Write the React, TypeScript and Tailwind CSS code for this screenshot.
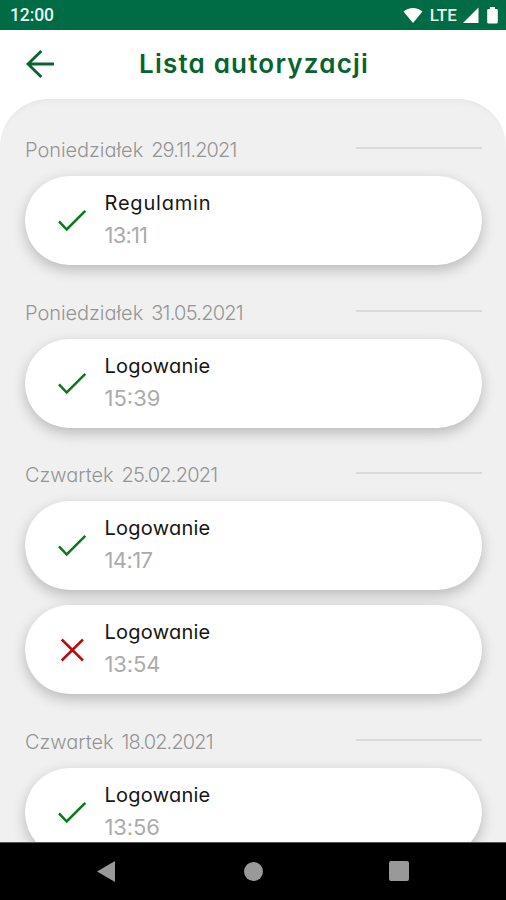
interface Entry { title: string; time: string; ok: boolean; titleTracking: string; timeTracking: string }
interface Day { day: string; date: string; dateTracking: string; entries: Entry[] }

const DAYS: Day[] = [
  {
    day: 'Poniedziałek', date: '29.11.2021', dateTracking: 'tracking-[-0.85px]',
    entries: [{ title: 'Regulamin', time: '13:11', ok: true, titleTracking: 'tracking-[0.8px]', timeTracking: 'tracking-[-0.8px]' }],
  },
  {
    day: 'Poniedziałek', date: '31.05.2021', dateTracking: 'tracking-[-0.75px]',
    entries: [{ title: 'Logowanie', time: '15:39', ok: true, titleTracking: 'tracking-[0.25px]', timeTracking: 'tracking-[0px]' }],
  },
  {
    day: 'Czwartek', date: '25.02.2021', dateTracking: 'tracking-[-0.8px]',
    entries: [
      { title: 'Logowanie', time: '14:17', ok: true, titleTracking: 'tracking-[0.25px]', timeTracking: 'tracking-[-0.6px]' },
      { title: 'Logowanie', time: '13:54', ok: false, titleTracking: 'tracking-[0.25px]', timeTracking: 'tracking-[-0.1px]' },
    ],
  },
  {
    day: 'Czwartek', date: '18.02.2021', dateTracking: 'tracking-[-0.85px]',
    entries: [{ title: 'Logowanie', time: '13:56', ok: true, titleTracking: 'tracking-[0.25px]', timeTracking: 'tracking-[-0.1px]' }],
  },
]

function StatusBar() {
  return (
    <div className="h-[29.5px] shrink-0 bg-[#006c45] text-[#e6f2ec] flex items-center justify-between pl-[10px] pr-[8px] pt-[2px] font-['Roboto',sans-serif]">
      <span className="text-[17.5px] leading-none tracking-[-0.1px] font-medium">12:00</span>
      <div className="flex items-center">
        <svg width="20" height="17" viewBox="0 0 20 17" fill="#fff">
          <path d="M.5 4.500C6-.3 14-.3 19.500 4.500L10 16z" />
        </svg>
        <span className="ml-[7px] text-[17px] leading-none font-medium tracking-[0.1px]">LTE</span>
        <svg className="ml-[6px]" width="16" height="17" viewBox="0 0 16 17" fill="#fff">
          <path d="M15.500.5V16H0z" />
        </svg>
        <svg className="ml-[8px]" width="11" height="17" viewBox="0 0 11 17" fill="#fff">
          <path d="M3 0h5v2h1.500q1.300 0 1.300 1.300v12q0 1.300-1.300 1.300h-8q-1.300 0-1.300-1.300v-12Q.2 2 1.500 2H3z" />
        </svg>
      </div>
    </div>
  )
}

function Header() {
  return (
    <div className="h-[69px] shrink-0 bg-white grid grid-cols-[139px_1fr] items-center text-[#07642f]">
      <svg className="ml-[26px]" width="29" height="28" viewBox="0 0 29 28" fill="none" stroke="currentColor" strokeWidth="2.800">
        <path d="M28 14H2M15.300 1L2 14l13.300 13" />
      </svg>
      <h1 className="text-[26px] leading-none font-semibold tracking-[1.2px] whitespace-nowrap pb-px">Lista autoryzacji</h1>
    </div>
  )
}

function StatusIcon({ ok }: { ok: boolean }) {
  return (
    <svg width="30" height="24" viewBox="0 0 30 24" fill="none" strokeWidth="2.500">
      {ok
        ? <path d="M2 12.300L9.700 20.500 28.300 1.800" stroke="#087a1c" />
        : <path d="M4.700 1.500L26 22.500M26 1.500L4.700 22.500" stroke="#b90d0d" />}
    </svg>
  )
}

function Card({ entry }: { entry: Entry }) {
  return (
    <div className="h-[89px] shrink-0 rounded-full bg-white shadow-[0_5px_14px_rgba(0,0,0,0.23)] flex pl-[32px]">
      <div className="w-[47.5px] pt-px flex items-center"><StatusIcon ok={entry.ok} /></div>
      <div className="pt-[14px]">
        <div className={`h-[26px] flex items-center text-[20px] leading-none text-[#161616] ${entry.titleTracking}`}>{entry.title}</div>
        <div className={`h-[38.5px] flex items-center text-[22px] leading-none font-normal text-[#ababab] ${entry.timeTracking}`}>{entry.time}</div>
      </div>
    </div>
  )
}

function NavBar() {
  return (
    <div className="h-[58px] shrink-0 bg-black border-t border-[#555] flex items-center justify-between px-[97px] pb-px">
      <svg width="18" height="21" viewBox="0 0 18 21" fill="#999"><path d="M18 0v21L0 10.500z" /></svg>
      <div className="size-[19px] rounded-full bg-[#999] ml-[3px]" />
      <div className="size-[20px] rounded-[2px] bg-[#999]" />
    </div>
  )
}

export default function App() {
  return (
    <div className="w-[506px] h-[900px] overflow-hidden flex flex-col bg-white font-['Inter',sans-serif] [font-feature-settings:'cv11','ss07']">
      <StatusBar />
      <Header />
      <main className="flex-1 min-h-0 overflow-hidden rounded-t-[48px] bg-[#f0f0f0] shadow-[inset_0_8px_6px_-6px_rgba(0,0,0,0.05)] px-[25px] pt-[25.5px] flex flex-col gap-[21.500px]">
        {DAYS.map(d => (
          <section key={d.date} className="shrink-0 w-[457px]">
            <div className="h-[52px] flex items-center justify-between">
              <div className="text-[20px] leading-none font-[350] text-[#959595] flex gap-[8px] whitespace-nowrap">
                <span className="tracking-[-0.05px]">{d.day}</span>
                <span className={d.dateTracking}>{d.date}</span>
              </div>
              <div className="w-[126px] h-[2px] mb-[4px] bg-[#dadada]" />
            </div>
            <div className="flex flex-col gap-[15px]">
              {d.entries.map(e => <Card key={e.time} entry={e} />)}
            </div>
          </section>
        ))}
      </main>
      <NavBar />
    </div>
  )
}
